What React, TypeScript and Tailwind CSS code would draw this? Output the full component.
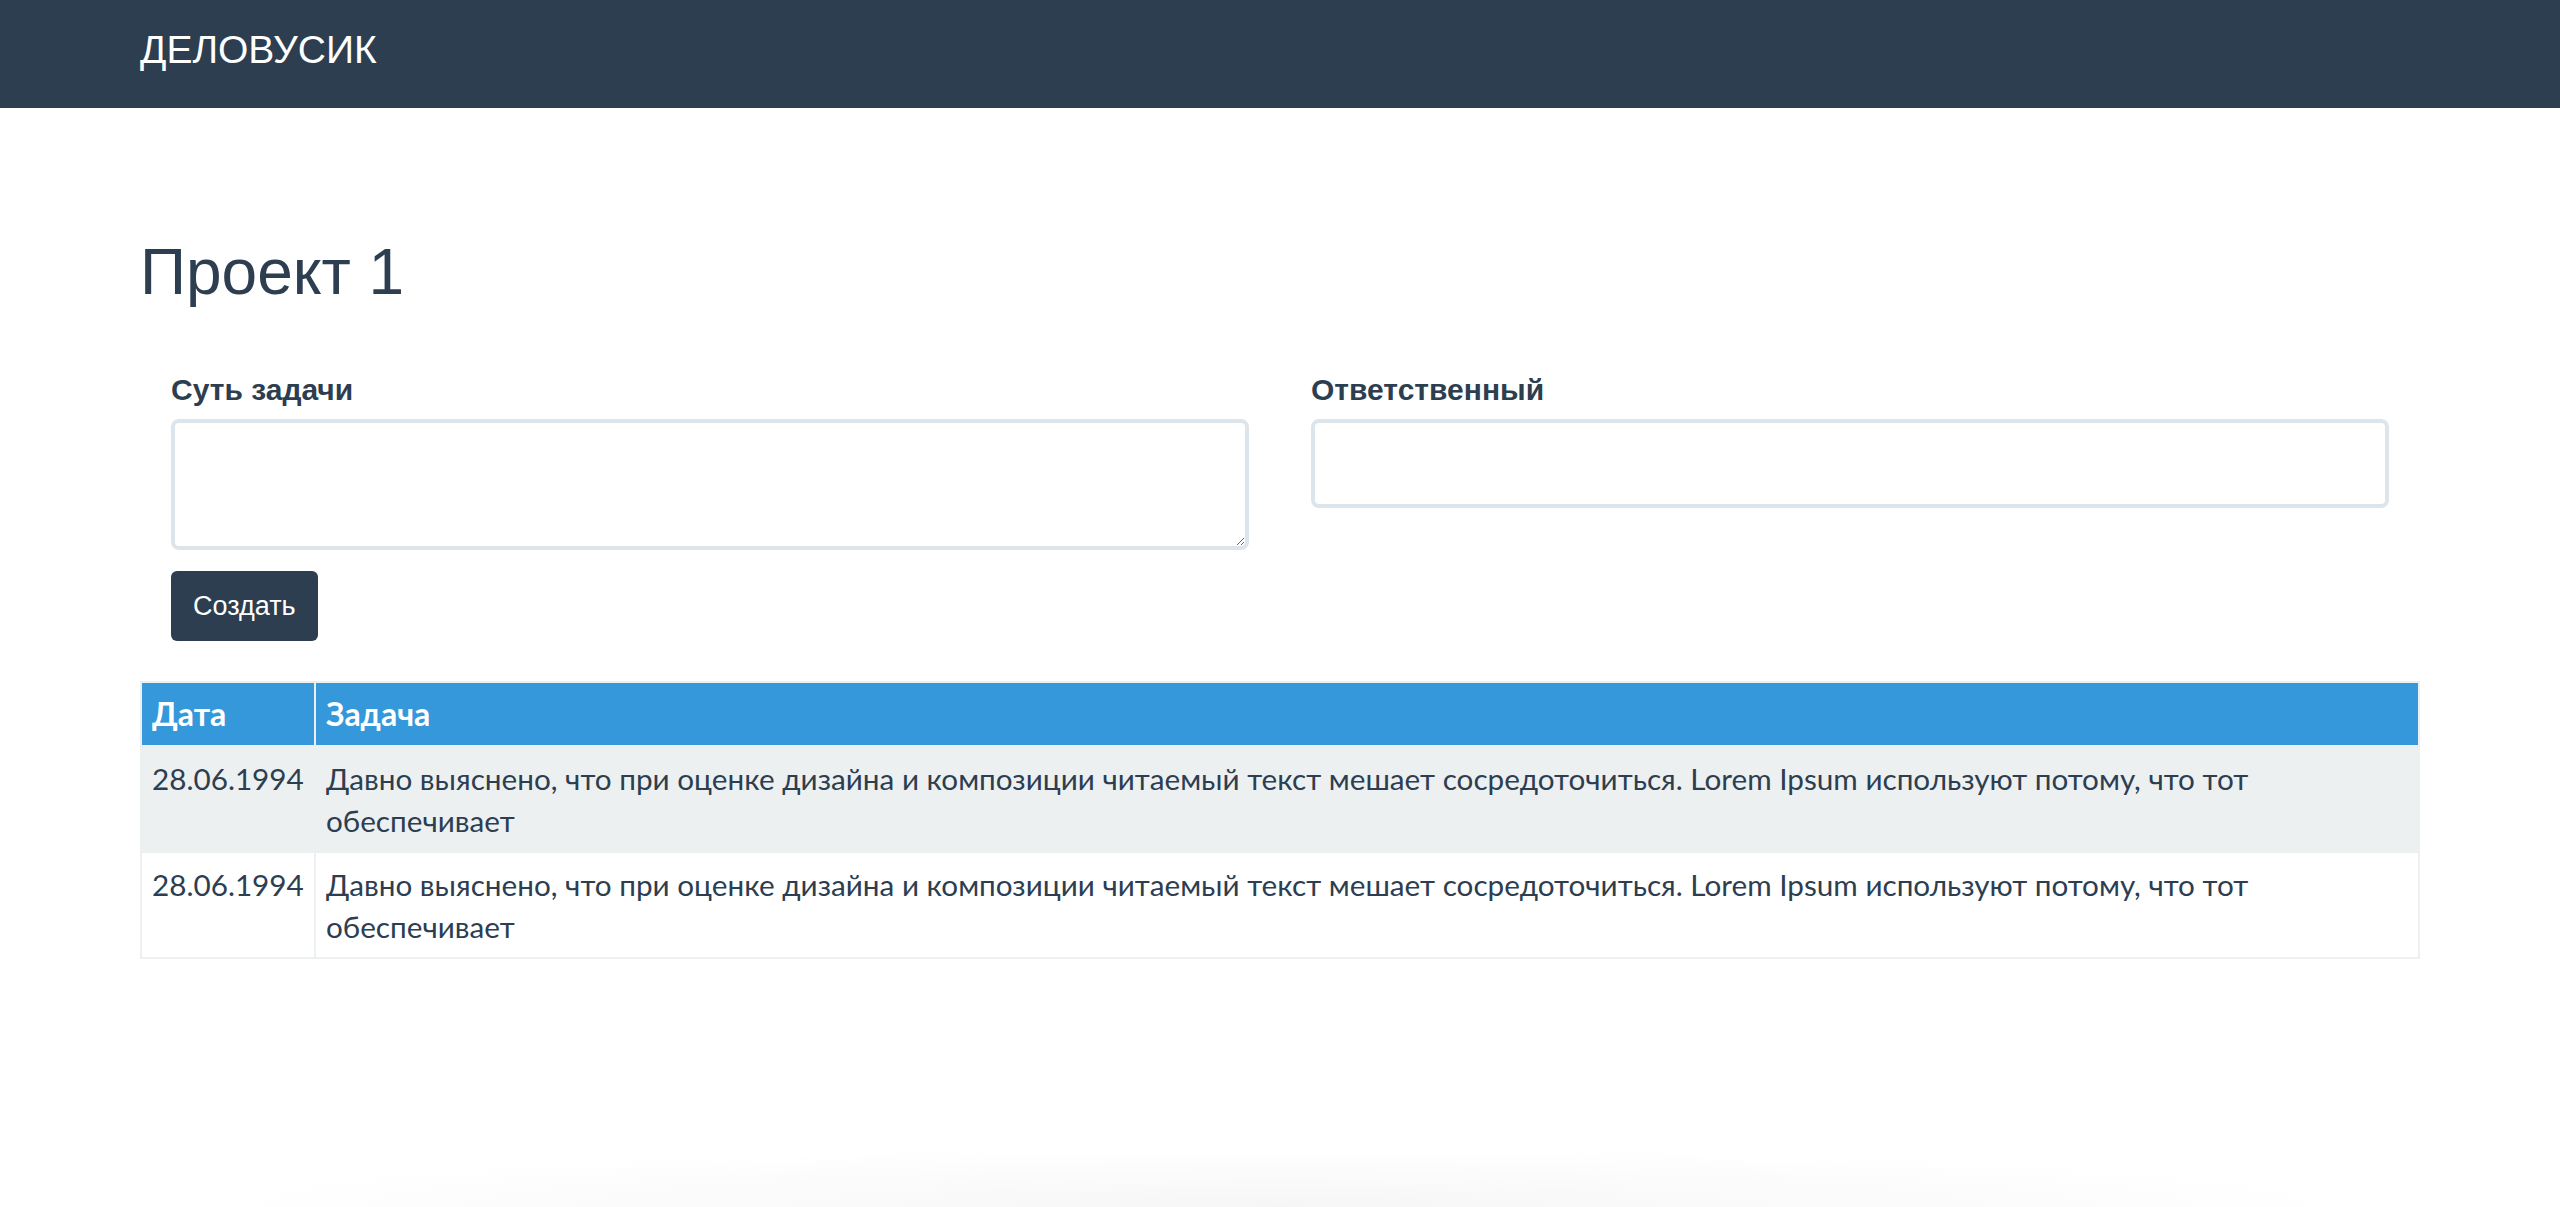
import React from "react";

const rows = [
  {
    date: "28.06.1994",
    l1: "Давно выяснено, что при оценке дизайна и композиции читаемый текст мешает сосредоточиться. Lorem Ipsum используют потому, что тот",
    l2: "обеспечивает",
  },
  {
    date: "28.06.1994",
    l1: "Давно выяснено, что при оценке дизайна и композиции читаемый текст мешает сосредоточиться. Lorem Ipsum используют потому, что тот",
    l2: "обеспечивает",
  },
];

export default function App() {
  return (
    <div className="min-h-[1207px] bg-white flex flex-col font-['Liberation_Sans',Arial,sans-serif] text-[#2c3e50]">
      <nav className="h-[108px] bg-[#2c3e50] px-[140px] pt-[31px] shrink-0">
        <span className="text-[39px] leading-[38px] text-white">ДЕЛОВУСИК</span>
      </nav>
      <main className="px-[140px]">
        <h1 className="mt-[130px] text-[64px] leading-[69px] font-normal">Проект 1</h1>
        <div className="mt-[65px] px-[31px]">
          <div className="grid grid-cols-2 gap-x-[62px] items-start">
            <div className="flex flex-col">
              <label className="text-[30px] leading-[35px] font-bold">Суть задачи</label>
              <textarea className="mt-[12px] h-[131px] w-full border-[4px] border-[#dce4ec] rounded-[8px] outline-none resize-y bg-white" />
            </div>
            <div className="flex flex-col">
              <label className="text-[30px] leading-[35px] font-bold">Ответственный</label>
              <input className="mt-[12px] h-[89px] w-full border-[4px] border-[#dce4ec] rounded-[8px] outline-none bg-white" />
            </div>
          </div>
          <button className="mt-[21px] h-[70px] px-[22px] bg-[#2c3e50] text-white text-[27px] leading-[38px] rounded-[6px]">
            Создать
          </button>
        </div>
        <table className="mt-[40px] w-full table-fixed border-collapse border-2 border-[#ecf0f1] font-['Lato',sans-serif]">
          <thead>
            <tr className="bg-[#3498db] text-white">
              <th className="w-[174px] border-2 border-[#ecf0f1] px-[10px] py-[10px] text-left text-[32px] leading-[42px] font-bold">Дата</th>
              <th className="border-2 border-[#ecf0f1] px-[10px] py-[10px] text-left text-[32px] leading-[42px] font-bold">Задача</th>
            </tr>
          </thead>
          <tbody>
            {rows.map((r, i) => (
              <tr key={i} className={i % 2 === 0 ? "bg-[#ecf0f1]" : "bg-white"}>
                <td className="border-2 border-[#ecf0f1] px-[10px] pt-[11px] pb-[9px] align-top text-[29.7px] leading-[42px]">{r.date}</td>
                <td className="border-2 border-[#ecf0f1] px-[10px] pt-[11px] pb-[9px] align-top text-[29.7px] leading-[42px]">
                  {r.l1}
                  <br />
                  {r.l2}
                </td>
              </tr>
            ))}
          </tbody>
        </table>
      </main>
      <div className="mt-auto h-[60px] mx-[180px] bg-[radial-gradient(ellipse_at_bottom,#f6f6f6,transparent_70%)]" />
    </div>
  );
}
